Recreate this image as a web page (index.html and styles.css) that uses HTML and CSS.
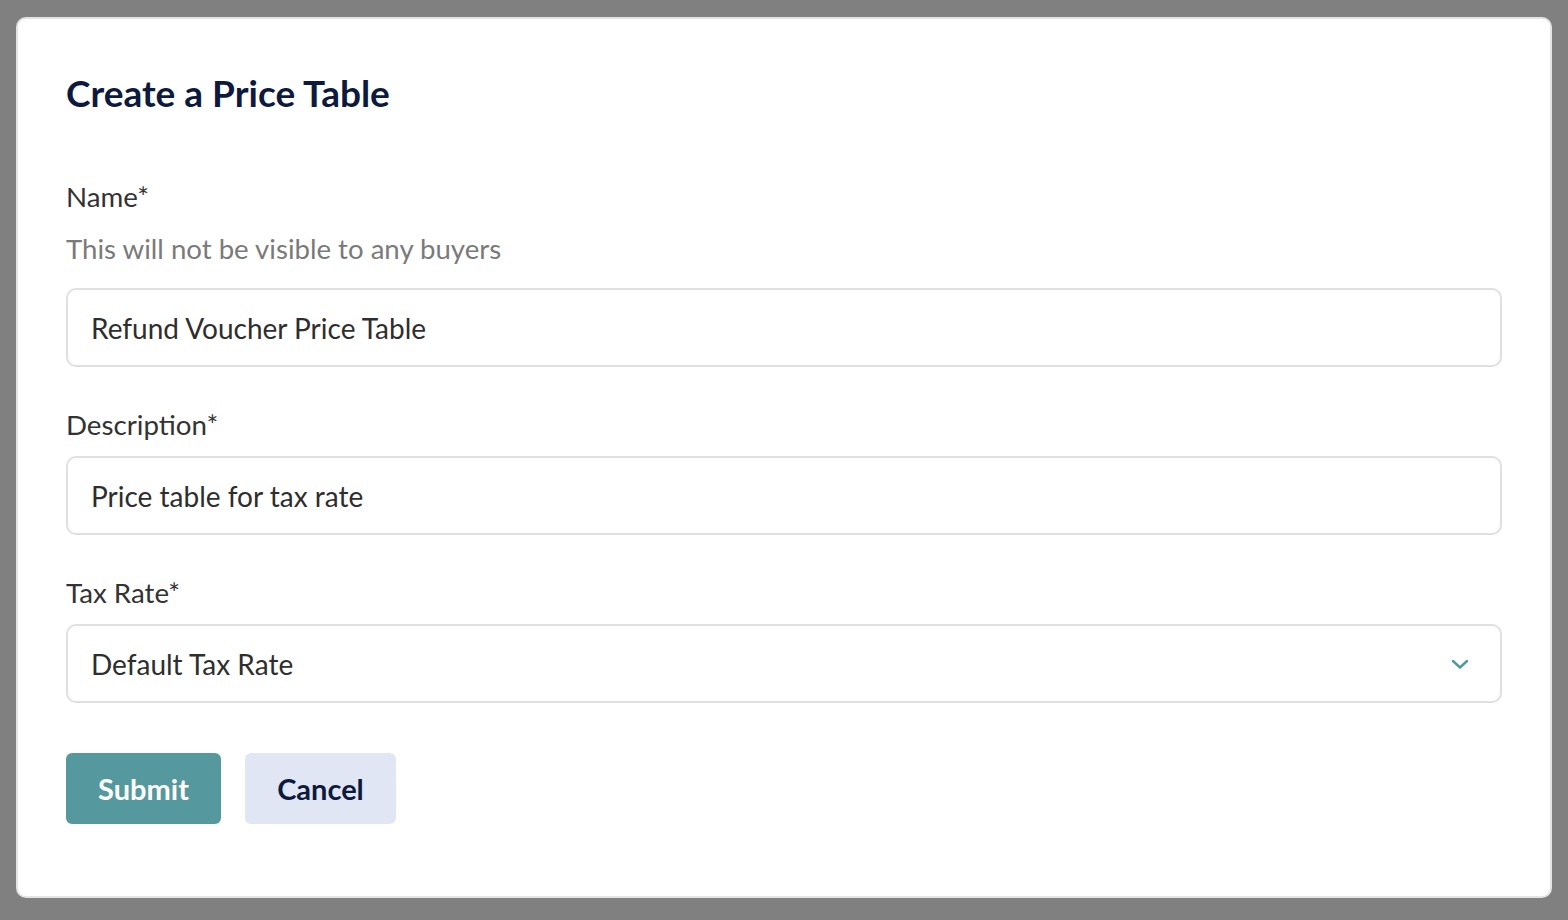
FILE: index.html
```html
<!DOCTYPE html>
<html lang="en">
<head>
<meta charset="utf-8">
<title>Create a Price Table</title>
<link rel="stylesheet" href="styles.css">
</head>
<body>
<div class="card">
  <h1 class="title">Create a Price Table</h1>
  <div class="field field-first">
    <div class="label">Name*</div>
    <div class="hint">This will not be visible to any buyers</div>
    <div class="input">Refund Voucher Price Table</div>
  </div>
  <div class="field">
    <div class="label">Description*</div>
    <div class="input">Price table for tax rate</div>
  </div>
  <div class="field">
    <div class="label">Tax Rate*</div>
    <div class="input select">
      <span>Default Tax Rate</span>
      <svg class="chevron" width="18" height="12" viewBox="0 0 18 12"><path d="M2 3 L9 9.5 L16 3" fill="none" stroke="#4f9aa0" stroke-width="2.4" stroke-linecap="round" stroke-linejoin="round"/></svg>
    </div>
  </div>
  <div class="actions">
    <button class="btn btn-primary">Submit</button>
    <button class="btn btn-secondary">Cancel</button>
  </div>
</div>
</body>
</html>
```
FILE: styles.css
```css
html, body {
  margin: 0;
  padding: 0;
  background: #808080;
  height: 100%;
}
body {
  font-family: Lato, "Noto Sans", sans-serif;
  padding: 17px 16px 0 16px;
  box-sizing: border-box;
}
.card {
  background: #ffffff;
  border: 2px solid #e4e4e4;
  border-radius: 10px;
  padding: 54px 48px 72px 48px;
  height: 881px;
  box-sizing: border-box;
}
.title {
  margin: 0;
  font-size: 37px;
  line-height: 40px;
  font-weight: 700;
  color: #0e1a3d;
}
.field {
  margin-top: 44px;
}
.field-first {
  margin-top: 70px;
}
.label {
  font-size: 27.7px;
  line-height: 28px;
  color: #333333;
  margin-bottom: 17px;
}
.field-first .label {
  margin-bottom: 24px;
}
.hint {
  font-size: 27.6px;
  line-height: 28px;
  color: #7a7a7a;
  margin-bottom: 25px;
}
.input {
  height: 79px;
  box-sizing: border-box;
  border: 2px solid #e0e0e0;
  border-radius: 10px;
  padding: 0 23px;
  display: flex;
  align-items: center;
  font-size: 28px;
  color: #2e2e2e;
}
.select {
  justify-content: space-between;
  padding-right: 31px;
}
.chevron {
  display: block;
}
.actions {
  margin-top: 50px;
  display: flex;
  gap: 24px;
}
.btn {
  height: 71px;
  border: none;
  border-radius: 6px;
  font-family: Lato, "Noto Sans", sans-serif;
  font-size: 29px;
  font-weight: 700;
  padding: 0;
  cursor: pointer;
}
.btn-primary {
  background: #55999f;
  color: #ffffff;
  width: 155px;
}
.btn-secondary {
  background: #e1e6f4;
  color: #0e1a3d;
  width: 151px;
}
```
